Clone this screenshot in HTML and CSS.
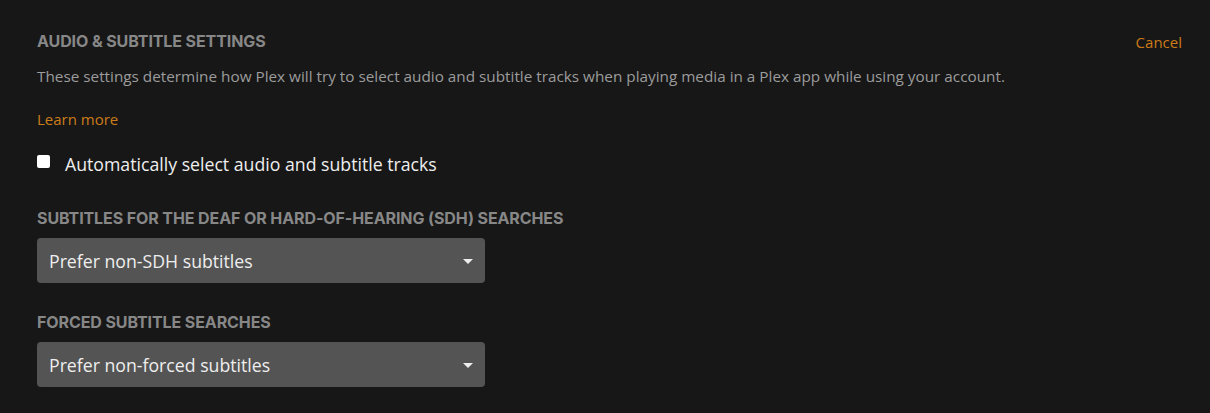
FILE: index.html
```html
<!DOCTYPE html>
<html>
<head>
<meta charset="utf-8">
<link rel="stylesheet" href="styles.css">
</head>
<body>
<div class="page">
  <div class="header">
    <h1 class="title">AUDIO &amp; SUBTITLE SETTINGS</h1>
    <a class="cancel" href="#">Cancel</a>
  </div>
  <p class="desc">These settings determine how Plex will try to select audio and subtitle tracks when playing media in a Plex app while using your account.</p>
  <a class="learn" href="#">Learn more</a>
  <label class="check">
    <span class="box"></span>
    <span class="check-label">Automatically select audio and subtitle tracks</span>
  </label>
  <div class="field">
    <h2 class="field-title">SUBTITLES FOR THE DEAF OR HARD-OF-HEARING (SDH) SEARCHES</h2>
    <div class="select">
      <span>Prefer non-SDH subtitles</span>
      <span class="caret"></span>
    </div>
  </div>
  <div class="field">
    <h2 class="field-title">FORCED SUBTITLE SEARCHES</h2>
    <div class="select">
      <span>Prefer non-forced subtitles</span>
      <span class="caret"></span>
    </div>
  </div>
</div>
</body>
</html>
```
FILE: styles.css
```css
html, body {
  margin: 0;
  padding: 0;
  background: #171717;
  height: 100%;
}
body {
  font-family: "Open Sans", "Noto Sans", sans-serif;
  color: #eeeeee;
}
.page {
  padding: 30px 28px 0 37px;
  display: flex;
  flex-direction: column;
}
.header {
  display: flex;
  justify-content: space-between;
  align-items: flex-start;
}
.title, .field-title {
  margin: 0;
  font-family: Inter, "Open Sans", sans-serif;
  font-weight: 700;
  font-size: 16px;
  line-height: 22px;
  color: #878787;
  letter-spacing: -0.1px;
}
.cancel {
  color: #cc7b19;
  text-decoration: none;
  font-size: 15px;
  line-height: 22px;
  margin-top: 1px;
}
.desc {
  margin: 12px 0 0;
  font-size: 15.3px;
  line-height: 22px;
  color: #9c9c9c;
}
.learn {
  margin-top: 21px;
  color: #cc7b19;
  text-decoration: none;
  font-size: 15px;
  line-height: 22px;
  align-self: flex-start;
}
.check {
  margin-top: 22px;
  display: flex;
  align-items: center;
  gap: 15px;
}
.box {
  width: 13px;
  height: 13px;
  background: #fff;
  border-radius: 2px;
  margin-top: -5px;
}
.check-label {
  font-size: 17.7px;
  line-height: 24px;
  color: #eeeeee;
}
.field {
  margin-top: 31px;
  display: flex;
  flex-direction: column;
  gap: 9px;
}
.field + .field {
  margin-top: 28px;
}
.select {
  width: 448px;
  height: 45px;
  box-sizing: border-box;
  background: #545454;
  border-radius: 4px;
  display: flex;
  align-items: center;
  justify-content: space-between;
  padding: 1px 12px 0 12px;
  font-size: 17.7px;
  color: #eeeeee;
}
.caret {
  width: 0;
  height: 0;
  border-left: 5px solid transparent;
  border-right: 5px solid transparent;
  border-top: 5px solid #eeeeee;
}
```
